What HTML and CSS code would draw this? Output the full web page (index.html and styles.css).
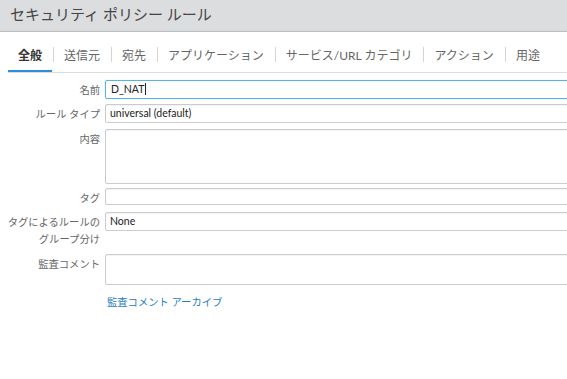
FILE: index.html
```html
<!DOCTYPE html>
<html lang="ja">
<head>
    <meta charset="UTF-8">
    <meta name="viewport" content="width=device-width, initial-scale=1.0">
    <title>セキュリティ ポリシー ルール</title>
    <link rel="stylesheet" href="styles.css">
</head>
<body>
    <header class="dialog-title">セキュリティ ポリシー ルール</header>

    <nav class="tabs">
        <span class="tab active">全般</span>
        <span class="sep"></span>
        <span class="tab">送信元</span>
        <span class="sep"></span>
        <span class="tab">宛先</span>
        <span class="sep"></span>
        <span class="tab">アプリケーション</span>
        <span class="sep"></span>
        <span class="tab">サービス/URL カテゴリ</span>
        <span class="sep"></span>
        <span class="tab">アクション</span>
        <span class="sep"></span>
        <span class="tab">用途</span>
    </nav>

    <form class="rule-form">
        <div class="row row-name">
            <label>名前</label>
            <div class="field focused">D_NAT<span class="caret"></span></div>
        </div>
        <div class="row row-type">
            <label>ルール タイプ</label>
            <div class="field">universal (default)</div>
        </div>
        <div class="row row-desc">
            <label>内容</label>
            <div class="field area-desc"></div>
        </div>
        <div class="row row-tag">
            <label>タグ</label>
            <div class="field field-tag"></div>
        </div>
        <div class="row row-group">
            <label>タグによるルールの<br>グループ分け</label>
            <div class="field">None</div>
        </div>
        <div class="row row-audit">
            <label>監査コメント</label>
            <div class="field area-audit"></div>
        </div>
        <a class="archive-link" href="#">監査コメント アーカイブ</a>
    </form>
</body>
</html>
```

FILE: styles.css
```css
html, body {
    overflow: hidden;
}
body {
    margin: 0;
    font-family: Lato, "Noto Sans CJK JP", sans-serif;
    background-color: #fff;
    color: #333;
}
.dialog-title {
    height: 31px;
    line-height: 28px;
    padding-left: 10px;
    font-size: 15px;
    color: #444;
    background-color: #dcdddf;
    border-bottom: 1px solid #bdbebf;
}
.tabs {
    display: flex;
    margin-left: 8px;
    border-bottom: 1px solid #dcdcdc;
    font-size: 12px;
    white-space: nowrap;
}
.tab {
    padding: 16px 10px 6px;
    line-height: 16px;
    color: #666;
    border-bottom: 2px solid transparent;
}
.tab.active {
    color: #333;
    font-weight: bold;
    border-bottom-color: #2b90d9;
}
.sep {
    width: 1px;
    height: 15px;
    margin: 15px 0 0 1px;
    background-color: #d4d4d4;
}
.rule-form {
    width: 620px;
    margin-top: 7px;
}
.row {
    display: flex;
    margin-bottom: 5px;
}
.row label {
    box-sizing: border-box;
    width: 105px;
    flex-shrink: 0;
    padding-top: 2px;
    padding-right: 5px;
    text-align: right;
    font-size: 10.3px;
    line-height: 16px;
    color: #666;
}
.row-type {
    margin-bottom: 6px;
}
.row-desc {
    margin-bottom: 4px;
}
.row-tag {
    margin-bottom: 6px;
}
.row-group {
    margin-bottom: 7px;
}
.row-group label {
    line-height: 16.5px;
}
.field {
    flex: 1;
    height: 17px;
    padding-left: 4px;
    border: 1px solid #cbcbcb;
    border-radius: 2px;
    box-shadow: inset 0 1px 1px rgba(0,0,0,0.05);
    font-size: 10.5px;
    line-height: 17px;
    color: #222;
}
.field.focused {
    border-color: #56b3e6;
    box-shadow: 0 0 1px #8fcdef;
    padding-left: 5px;
}
.caret {
    display: inline-block;
    width: 1px;
    height: 12px;
    margin-left: 1px;
    vertical-align: -2px;
    background-color: #222;
}
.field-tag {
    height: 15px;
}
.area-desc {
    height: 53px;
}
.area-audit {
    height: 29px;
}
.archive-link {
    display: block;
    margin-left: 107px;
    margin-top: 9px;
    font-size: 10.3px;
    line-height: 16px;
    color: #1f7cc4;
    text-decoration: none;
}
```
